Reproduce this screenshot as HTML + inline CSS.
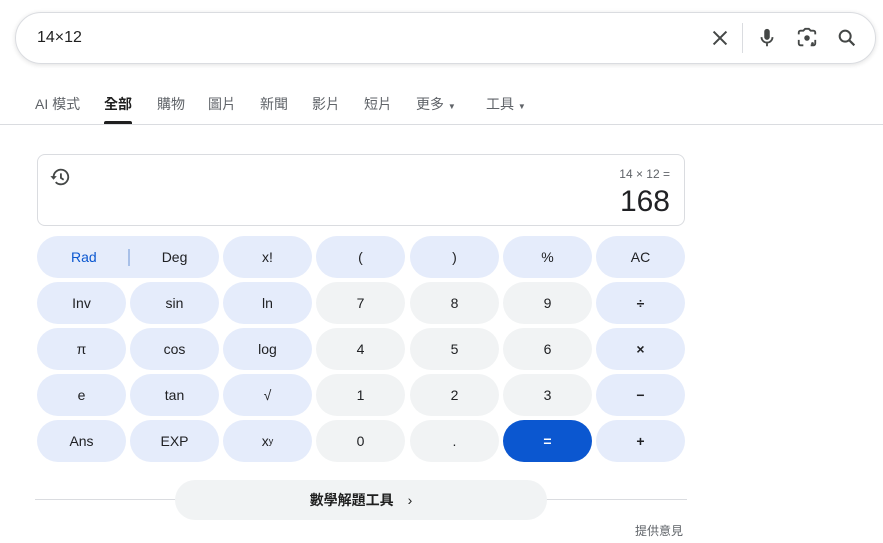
<!DOCTYPE html>
<html><head><meta charset="utf-8"><style>
*{box-sizing:border-box;margin:0;padding:0}
body{width:883px;height:543px;background:#fff;font-family:"Liberation Sans","Noto Sans CJK TC",sans-serif;position:relative;overflow:hidden;color:#1f1f1f}
.search{position:absolute;left:15px;top:12px;width:861px;height:52px;border:1px solid #dadce0;border-radius:26px;box-shadow:0 1px 5px rgba(32,33,36,.14)}
.q{position:absolute;left:21px;top:16px;font-size:16px;color:#1f1f1f}
.ic{position:absolute;top:14px}
.tabs{position:absolute;top:94px;left:0;font-size:14px;color:#5f6368}
.tabs span{position:absolute;white-space:nowrap}
.line{position:absolute;left:0;top:124px;width:883px;height:1px;background:#dadce0}
.disp{position:absolute;left:37px;top:154px;width:648px;height:72px;border:1px solid #dadce0;border-radius:8px}
.b{position:absolute;width:89px;height:42px;border-radius:21px;background:#e5ecfb;font-size:14px;display:flex;align-items:center;justify-content:center;color:#202124}
.g{background:#f1f3f4}
.op{font-weight:bold}
.eq{background:#0b57d0;color:#fff;font-weight:bold}
</style></head><body>
<div class="search">
<div class="q">14×12</div>
<svg class="ic" style="left:693px" width="22" height="22" viewBox="0 0 24 24"><path d="M5 5L19 19M19 5L5 19" stroke="#444746" stroke-width="2.2"/></svg>
<div style="position:absolute;left:726px;top:10px;width:1px;height:30px;background:#dadce0"></div>
<svg class="ic" style="left:740px" width="22" height="22" viewBox="0 0 24 24"><rect x="9" y="2" width="6" height="12" rx="3" fill="#444746"/><path d="M6 11a6 6 0 0 0 12 0M12 17v4" stroke="#444746" stroke-width="2" fill="none"/></svg>
<svg class="ic" style="left:780px" width="22" height="22" viewBox="0 0 24 24"><path d="M3 8V6a2 2 0 0 1 2-2h3l2-2h4l2 2h3a2 2 0 0 1 2 2v2M21 14v4a2 2 0 0 1-2 2h-3M3 14v4a2 2 0 0 0 2 2h3" stroke="#444746" stroke-width="2" fill="none"/><circle cx="12" cy="12" r="3" fill="#444746"/><circle cx="18" cy="18" r="1.5" fill="#444746"/></svg>
<svg class="ic" style="left:820px" width="22" height="22" viewBox="0 0 24 24"><circle cx="10" cy="10" r="6" stroke="#444746" stroke-width="2.2" fill="none"/><path d="M14.5 14.5L20 20" stroke="#444746" stroke-width="2.4"/></svg>
</div>
<div class="tabs">
<span style="left:35px">AI 模式</span>
<span style="left:104px;color:#1f1f1f;font-weight:bold">全部</span>
<span style="left:157px">購物</span>
<span style="left:208px">圖片</span>
<span style="left:260px">新聞</span>
<span style="left:312px">影片</span>
<span style="left:364px">短片</span>
<span style="left:416px">更多 <small style="font-size:8px">▼</small></span>
<span style="left:486px">工具 <small style="font-size:8px">▼</small></span>
</div>
<div style="position:absolute;left:104px;top:121px;width:28px;height:3px;background:#1f1f1f;border-radius:2px 2px 0 0"></div>
<div class="line"></div>
<div class="disp">
<svg style="position:absolute;left:11px;top:11px" width="22" height="22" viewBox="0 0 24 24"><path d="M5 12a8 8 0 1 1 2.3 5.6" stroke="#444746" stroke-width="2" fill="none"/><path d="M1.5 11h7L5 15z" fill="#444746"/><path d="M13 8v5l3 2" stroke="#444746" stroke-width="2" fill="none"/></svg>
<div style="position:absolute;right:14px;top:12px;font-size:12px;color:#5f6368">14 × 12 =</div>
<div style="position:absolute;right:14px;top:30px;font-size:30px;color:#202124">168</div>
</div>
<div class="b" style="left:37px;top:236px;width:182px;justify-content:flex-start"><span style="color:#0b57d0;margin-left:34px">Rad</span><span style="width:2px;height:17px;background:#a8c0e8;margin-left:31px"></span><span style="margin-left:32px">Deg</span></div>
<div class="b" style="left:223px;top:236px">x!</div>
<div class="b" style="left:316px;top:236px">(</div>
<div class="b" style="left:410px;top:236px">)</div>
<div class="b" style="left:503px;top:236px">%</div>
<div class="b" style="left:596px;top:236px">AC</div>

<div class="b" style="left:37px;top:282px">Inv</div>
<div class="b" style="left:130px;top:282px">sin</div>
<div class="b" style="left:223px;top:282px">ln</div>
<div class="b g" style="left:316px;top:282px">7</div>
<div class="b g" style="left:410px;top:282px">8</div>
<div class="b g" style="left:503px;top:282px">9</div>
<div class="b op" style="left:596px;top:282px">÷</div>

<div class="b" style="left:37px;top:328px">π</div>
<div class="b" style="left:130px;top:328px">cos</div>
<div class="b" style="left:223px;top:328px">log</div>
<div class="b g" style="left:316px;top:328px">4</div>
<div class="b g" style="left:410px;top:328px">5</div>
<div class="b g" style="left:503px;top:328px">6</div>
<div class="b op" style="left:596px;top:328px">×</div>

<div class="b" style="left:37px;top:374px">e</div>
<div class="b" style="left:130px;top:374px">tan</div>
<div class="b" style="left:223px;top:374px">√</div>
<div class="b g" style="left:316px;top:374px">1</div>
<div class="b g" style="left:410px;top:374px">2</div>
<div class="b g" style="left:503px;top:374px">3</div>
<div class="b op" style="left:596px;top:374px">−</div>

<div class="b" style="left:37px;top:420px">Ans</div>
<div class="b" style="left:130px;top:420px">EXP</div>
<div class="b" style="left:223px;top:420px">x<sup style="font-size:9px">y</sup></div>
<div class="b g" style="left:316px;top:420px">0</div>
<div class="b g" style="left:410px;top:420px">.</div>
<div class="b eq" style="left:503px;top:420px">=</div>
<div class="b op" style="left:596px;top:420px">+</div>

<div style="position:absolute;left:35px;top:499px;width:652px;height:1px;background:#dadce0"></div>
<div style="position:absolute;left:175px;top:480px;width:372px;height:40px;border-radius:20px;background:#f1f3f4;display:flex;align-items:center;justify-content:center;font-size:14px;font-weight:bold;color:#1f1f1f">數學解題工具<span style="margin-left:14px;font-weight:normal">›</span></div>
<div style="position:absolute;left:635px;top:522px;font-size:12px;color:#5f6368">提供意見</div>
</body></html>
